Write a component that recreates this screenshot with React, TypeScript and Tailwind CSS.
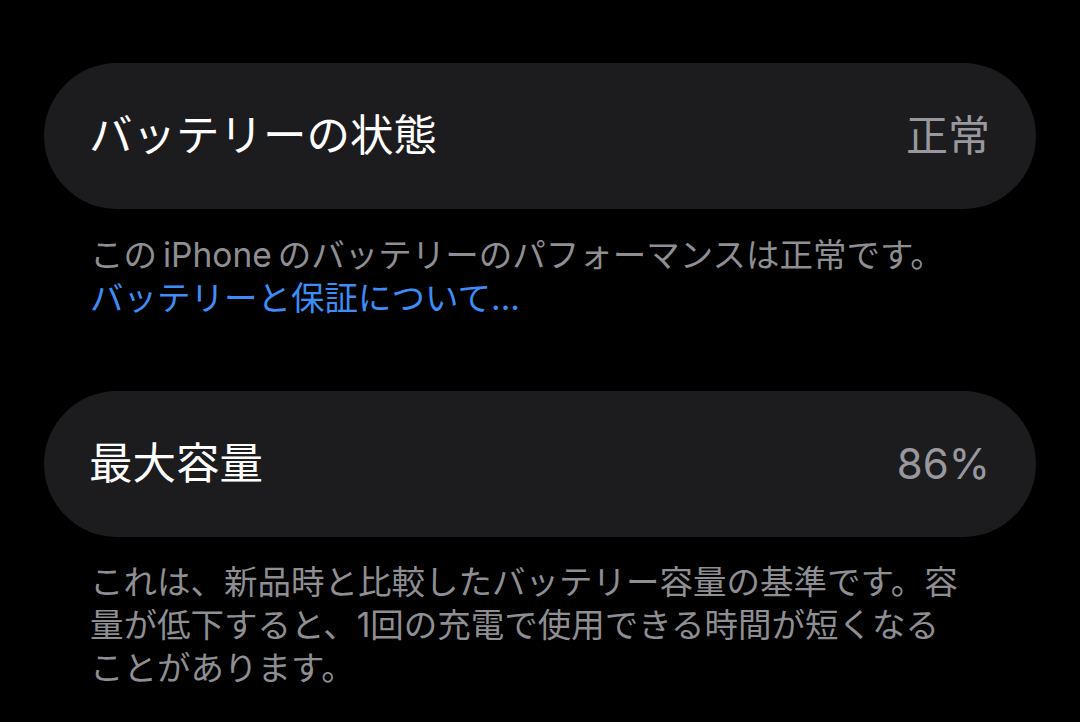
import React from "react";

const font = { fontFamily: '"Inter", "Noto Sans CJK JP", sans-serif' };

function Row({ label, value }: { label: string; value: string }) {
  return (
    <div className="flex h-[146px] items-center justify-between rounded-full bg-[#1c1c1e] pl-[45px] pr-[46px]">
      <span className="text-[43.5px] leading-none text-white">{label}</span>
      <span className="text-[42px] leading-none text-[#98989e]">{value}</span>
    </div>
  );
}

export default function App() {
  return (
    <div className="min-h-[722px] w-full bg-black" style={font}>
      <div className="flex flex-col px-[44px] pt-[63px]">
        <Row label="バッテリーの状態" value="正常" />
        <p className="mt-[25px] pl-[46px] text-[33.5px] leading-[43px] text-[#8e8e93]">
          この<span className="mx-[6px]">iPhone</span>のバッテリーのパフォーマンスは正常です。
          <br />
          <span className="text-[#3c8df5]">バッテリーと保証について...</span>
        </p>

        <div className="mt-[71px]">
          <Row label="最大容量" value="86%" />
        </div>
        <p className="mt-[24px] pl-[46px] text-[33.5px] leading-[43px] text-[#8e8e93]">
          これは、新品時と比較したバッテリー容量の基準です。容
          <br />
          量が低下すると、1回の充電で使用できる時間が短くなる
          <br />
          ことがあります。
        </p>
      </div>
    </div>
  );
}
